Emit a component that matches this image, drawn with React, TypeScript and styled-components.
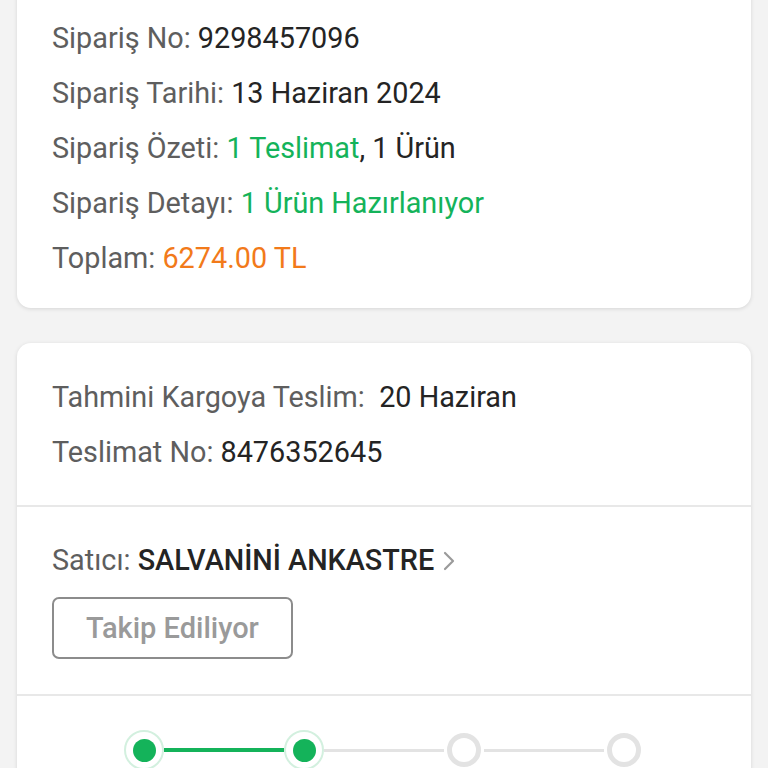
import React from "react";
import styled, { createGlobalStyle } from "styled-components";

const GlobalStyle = createGlobalStyle`
    body {
        margin: 0;
        background: #f3f3f3;
        font-family: Roboto, "Noto Sans", sans-serif;
        overflow: hidden;
    }
`

const Page = styled.div`
    padding: 0 17px;
    display: flex;
    flex-direction: column;
    gap: 35px;
`

const Card = styled.div<{ $offsetTop?: number }>`
    background: #fff;
    border-radius: 14px;
    box-shadow: 0 1px 4px rgba(0, 0, 0, 0.12);
    margin-top: ${(p) => p.$offsetTop ?? 0}px;
    overflow: hidden;
`

const Section = styled.div<{ $pt: number; $pb: number; $divider?: boolean }>`
    padding: ${(p) => p.$pt}px 35px ${(p) => p.$pb}px;
    border-top: ${(p) => (p.$divider ? "2px solid #e8e8e8" : "none")};
`

const Row = styled.div`
    font-size: 28.8px;
    line-height: 55px;
    color: #5e5e5e;
    white-space: pre;
    display: flex;
    align-items: center;
`

type Tone = "dark" | "green" | "orange"

const Value = styled.span<{ $tone?: Tone; $bold?: boolean }>`
    color: ${(p) =>
        p.$tone === "green" ? "#14b35a" : p.$tone === "orange" ? "#f27a1a" : "#242424"};
    font-weight: ${(p) => (p.$bold ? 500 : 400)};
`

const Chevron = styled.svg`
    width: 14px;
    height: 22px;
    margin-left: 8px;
`

const FollowButton = styled.div`
    margin-top: 9px;
    width: 241px;
    height: 62px;
    box-sizing: border-box;
    border: 2px solid #8c8c8c;
    border-radius: 7px;
    display: flex;
    align-items: center;
    justify-content: center;
    font-size: 29px;
    font-weight: 500;
    color: #9a9a9a;
`

const Stepper = styled.div`
    display: flex;
    align-items: center;
    justify-content: center;
`

const Node = styled.div<{ $done?: boolean }>`
    width: 40px;
    height: 40px;
    box-sizing: border-box;
    border-radius: 50%;
    display: flex;
    align-items: center;
    justify-content: center;
    border: ${(p) => (p.$done ? "2px solid #d3f0df" : "none")};
    background: #fff;
`

const Dot = styled.div`
    width: 23px;
    height: 23px;
    border-radius: 50%;
    background: #14b35a;
`

const Ring = styled.div`
    width: 34px;
    height: 34px;
    box-sizing: border-box;
    border-radius: 50%;
    border: 5px solid #e3e3e3;
`

const Line = styled.div<{ $done?: boolean }>`
    width: 120px;
    height: ${(p) => (p.$done ? 4 : 3)}px;
    background: ${(p) => (p.$done ? "#14b35a" : "#e3e3e3")};
`

const steps = [true, true, false, false]

export default function App() {
    return (
        <>
            <GlobalStyle />
            <Page>
                <Card $offsetTop={-20}>
                    <Section $pt={31} $pb={22}>
                        <Row>Sipariş No: <Value>9298457096</Value></Row>
                        <Row>Sipariş Tarihi: <Value>13 Haziran 2024</Value></Row>
                        <Row>
                            Sipariş Özeti: <Value $tone="green">1 Teslimat</Value><Value>, 1 Ürün</Value>
                        </Row>
                        <Row>Sipariş Detayı: <Value $tone="green">1 Ürün Hazırlanıyor</Value></Row>
                        <Row>Toplam: <Value $tone="orange">6274.00 TL</Value></Row>
                    </Section>
                </Card>
                <Card>
                    <Section $pt={27} $pb={25}>
                        <Row>Tahmini Kargoya Teslim:  <Value>20 Haziran</Value></Row>
                        <Row>Teslimat No: <Value>8476352645</Value></Row>
                    </Section>
                    <Section $pt={26} $pb={35} $divider>
                        <Row>
                            Satıcı: <Value $bold>SALVANİNİ ANKASTRE</Value>
                            <Chevron viewBox="0 0 14 22">
                                <path d="M3 3 L11 11 L3 19" fill="none" stroke="#9a9a9a" strokeWidth="2.2" strokeLinecap="round" strokeLinejoin="round" />
                            </Chevron>
                        </Row>
                        <FollowButton>Takip Ediliyor</FollowButton>
                    </Section>
                    <Section $pt={34} $pb={40} $divider>
                        <Stepper>
                            {steps.map((done, i) => (
                                <React.Fragment key={i}>
                                    {i > 0 && <Line $done={done} />}
                                    <Node $done={done}>{done ? <Dot /> : <Ring />}</Node>
                                </React.Fragment>
                            ))}
                        </Stepper>
                    </Section>
                </Card>
            </Page>
        </>
    )
}
